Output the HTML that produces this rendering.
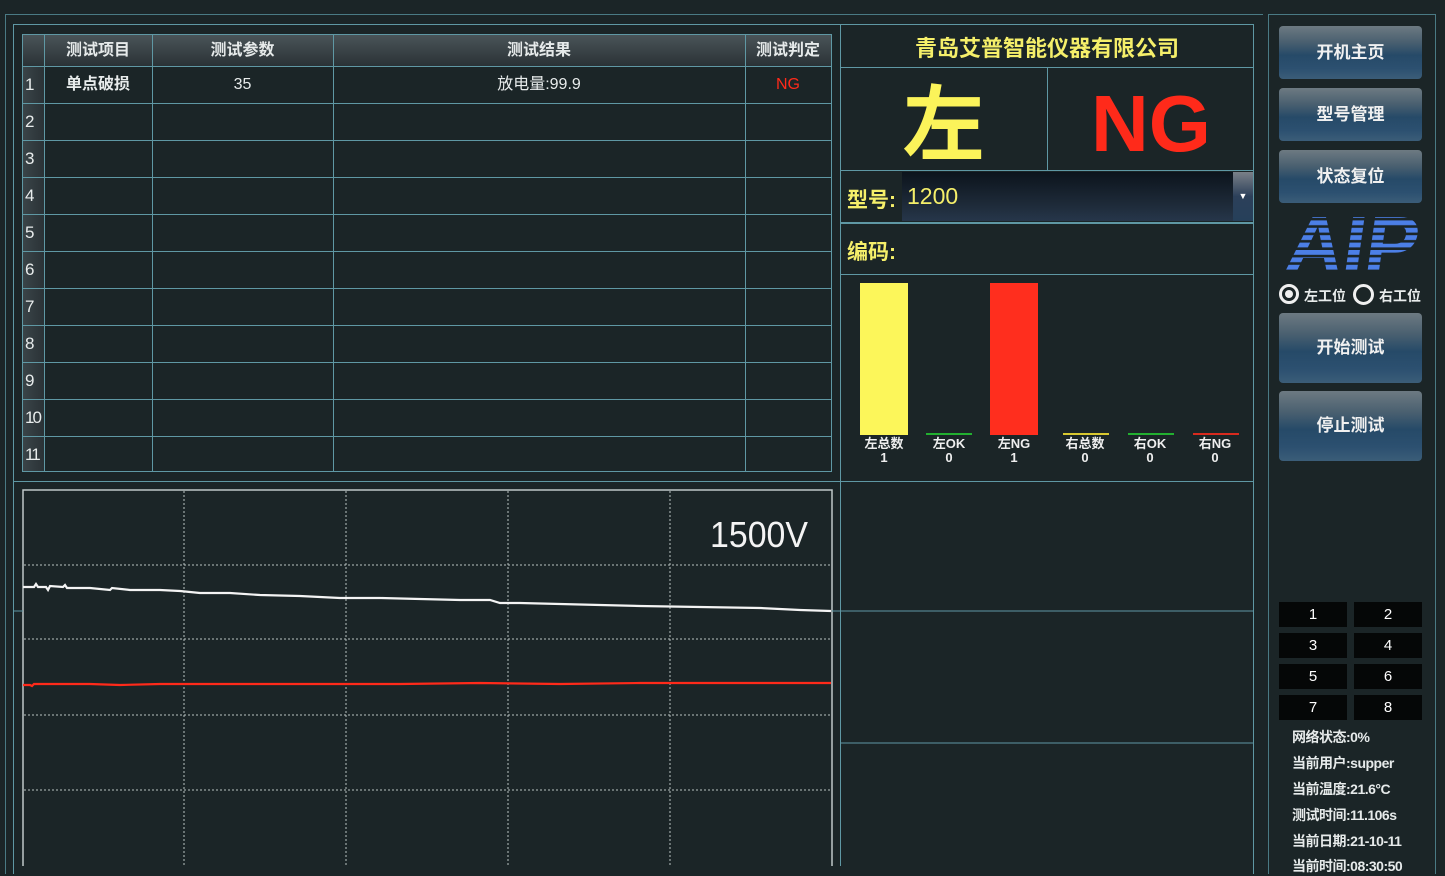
<!DOCTYPE html>
<html><head><meta charset="utf-8"><style>
*{margin:0;padding:0;box-sizing:border-box}
body{width:1445px;height:866px;background:#1b2527;position:relative;overflow:hidden;font-family:"Liberation Sans","Noto Sans CJK SC",sans-serif;color:#e8ecec}
.a{position:absolute}
.l{position:absolute;background:#5f98a4}
.hd{position:absolute;top:35px;height:31px;background:linear-gradient(#4a5458,#2a3236);color:#e6eaea;font-size:16px;font-weight:bold;text-align:center;line-height:31px}
.rn{position:absolute;left:23px;width:21px;background:linear-gradient(90deg,#3a4448,#2a3236);font-size:17px;line-height:38px;padding-left:2px;color:#e8ecec}
.c1{position:absolute;top:66px;height:37px;line-height:38px;text-align:center;font-size:16px}
.btn{position:absolute;left:1279px;width:143px;border-radius:4px;background:linear-gradient(#6d7a82 0%,#4a6070 30%,#264a68 55%,#2c5070 80%,#3b5d78 100%);color:#f0f0f0;font-size:17px;font-weight:bold;text-align:center}
.nb{position:absolute;width:68px;height:25px;background:#050707;color:#fff;font-size:15px;text-align:center;line-height:25px}
.st{position:absolute;left:1292px;font-size:14px;font-weight:bold;color:#e6eaea;letter-spacing:-0.5px}
.bl{position:absolute;font-size:13px;font-weight:bold;text-align:center;width:60px;line-height:14px;color:#eee}
</style></head><body>
<div class="a" style="left:5px;top:14px;width:1258px;height:860px;border:1px solid #4a7a84;border-right:none;border-bottom:none"></div>
<div class="a" style="left:13px;top:24px;width:1241px;height:850px;border:1px solid #5f98a4;border-bottom:none"></div>
<div class="a" style="left:1268px;top:14px;width:168px;height:860px;border:1px solid #4a7a84;border-bottom:none"></div>

<div class="a" style="left:22px;top:34px;width:810px;height:438px;border:1px solid #5f98a4"></div>
<div class="hd" style="left:23px;width:21px"></div>
<div class="hd" style="left:44px;width:108px">测试项目</div>
<div class="hd" style="left:152px;width:181px">测试参数</div>
<div class="hd" style="left:333px;width:412px">测试结果</div>
<div class="hd" style="left:745px;width:86px">测试判定</div>
<div class="rn" style="top:66px;height:37px">1</div>
<div class="rn" style="top:103px;height:37px">2</div>
<div class="rn" style="top:140px;height:37px">3</div>
<div class="rn" style="top:177px;height:37px">4</div>
<div class="rn" style="top:214px;height:37px">5</div>
<div class="rn" style="top:251px;height:37px">6</div>
<div class="rn" style="top:288px;height:37px">7</div>
<div class="rn" style="top:325px;height:37px">8</div>
<div class="rn" style="top:362px;height:37px">9</div>
<div class="rn" style="top:399px;height:37px;letter-spacing:-2px">10</div>
<div class="rn" style="top:436px;height:35px;letter-spacing:-2px">11</div>
<div class="l" style="left:23px;top:66px;width:808px;height:1px"></div>
<div class="l" style="left:23px;top:103px;width:808px;height:1px"></div>
<div class="l" style="left:23px;top:140px;width:808px;height:1px"></div>
<div class="l" style="left:23px;top:177px;width:808px;height:1px"></div>
<div class="l" style="left:23px;top:214px;width:808px;height:1px"></div>
<div class="l" style="left:23px;top:251px;width:808px;height:1px"></div>
<div class="l" style="left:23px;top:288px;width:808px;height:1px"></div>
<div class="l" style="left:23px;top:325px;width:808px;height:1px"></div>
<div class="l" style="left:23px;top:362px;width:808px;height:1px"></div>
<div class="l" style="left:23px;top:399px;width:808px;height:1px"></div>
<div class="l" style="left:23px;top:436px;width:808px;height:1px"></div>
<div class="l" style="left:44px;top:35px;width:1px;height:436px"></div>
<div class="l" style="left:152px;top:35px;width:1px;height:436px"></div>
<div class="l" style="left:333px;top:35px;width:1px;height:436px"></div>
<div class="l" style="left:745px;top:35px;width:1px;height:436px"></div>
<div class="c1" style="left:44px;width:108px;font-weight:bold">单点破损</div>
<div class="c1" style="left:152px;width:181px">35</div>
<div class="c1" style="left:333px;width:412px">放电量:99.9</div>
<div class="c1" style="left:745px;width:86px;color:#ff2a1a">NG</div>

<div class="l" style="left:13px;top:481px;width:1241px;height:1px"></div>
<div class="l" style="left:840px;top:25px;width:1px;height:841px"></div>

<svg class="a" style="left:0;top:0" width="1445" height="866">
<rect x="23" y="490" width="809" height="380" fill="none" stroke="#bfc8c8" stroke-width="1.5"/>
<g stroke="#b8c2c2" stroke-width="1" stroke-dasharray="2,2">
<line x1="184" y1="491" x2="184" y2="866"/><line x1="346" y1="491" x2="346" y2="866"/><line x1="508" y1="491" x2="508" y2="866"/><line x1="670" y1="491" x2="670" y2="866"/>
<line x1="24" y1="565" x2="831" y2="565"/><line x1="24" y1="639" x2="831" y2="639"/><line x1="24" y1="715" x2="831" y2="715"/><line x1="24" y1="790" x2="831" y2="790"/>
</g>
<line x1="13" y1="611" x2="23" y2="611" stroke="#5f98a4"/>
<line x1="832" y1="611" x2="1254" y2="611" stroke="#5f98a4"/>
<line x1="840" y1="743" x2="1254" y2="743" stroke="#5f98a4"/>
<polyline fill="none" stroke="#f4f4f4" stroke-width="2.2" points="23,587 34,587 36,584 38,587 46,587 48,590 50,586 63,587 65,585 67,588 90,588 110,590 112,588 130,590 160,590 180,591 200,593 230,593 260,595 300,596 340,598 380,598 420,599 460,600 490,600 500,603 520,603 560,604 600,605 640,606 700,607 760,608 800,610 831,611"/>
<polyline fill="none" stroke="#ff2a1a" stroke-width="2.2" points="23,685 30,685 32,686 34,684 60,684 90,684 120,685 160,684 200,684 260,684 320,684 400,684 480,683 560,684 640,683 720,683 780,683 831,683"/>
<text x="808" y="547" text-anchor="end" font-family="Liberation Sans" font-size="36" fill="#f4f4f4" textLength="98" lengthAdjust="spacingAndGlyphs">1500V</text>
</svg>

<div class="l" style="left:840px;top:67px;width:414px;height:1px"></div>
<div class="l" style="left:1047px;top:67px;width:1px;height:103px"></div>
<div class="l" style="left:840px;top:170px;width:414px;height:1px"></div>
<div class="l" style="left:840px;top:222px;width:414px;height:2px"></div>
<div class="l" style="left:840px;top:274px;width:414px;height:1px"></div>
<div class="a" style="left:840px;top:31px;width:414px;text-align:center;font-size:22px;font-weight:bold;color:#f5ef6a">青岛艾普智能仪器有限公司</div>
<div class="a" style="left:840px;top:78px;width:207px;text-align:center;font-size:82px;font-weight:bold;color:#fbf35a;line-height:96px">左</div>
<div class="a" style="left:1048px;top:76px;width:206px;text-align:center;font-size:80px;font-weight:bold;color:#ff2a1a;line-height:96px">NG</div>
<div class="a" style="left:847px;top:184px;font-size:21px;font-weight:bold;color:#f5ef6a">型号:</div>
<div class="a" style="left:902px;top:172px;width:331px;height:49px;background:linear-gradient(#0c141c,#1c2836 60%,#26364a);"></div>
<div class="a" style="left:1233px;top:172px;width:20px;height:49px;background:linear-gradient(#7a8088,#2c405a 50%,#26405a);color:#fff;font-size:9px;text-align:center;line-height:49px">▼</div>
<div class="a" style="left:907px;top:183px;font-size:23px;color:#f5ef6a">1200</div>
<div class="a" style="left:847px;top:236px;font-size:21px;font-weight:bold;color:#f5ef6a">编码:</div>
<div class="a" style="left:860px;top:283px;width:48px;height:152px;background:#fcf65a"></div>
<div class="a" style="left:990px;top:283px;width:48px;height:152px;background:#ff2e1e"></div>
<div class="a" style="left:926px;top:433px;width:46px;height:2px;background:#22b030"></div>
<div class="a" style="left:1063px;top:433px;width:46px;height:2px;background:#d8c830"></div>
<div class="a" style="left:1128px;top:433px;width:46px;height:2px;background:#22b030"></div>
<div class="a" style="left:1193px;top:433px;width:46px;height:2px;background:#d82a1e"></div>
<div class="bl" style="left:854px;top:437px">左总数<br>1</div>
<div class="bl" style="left:919px;top:437px">左OK<br>0</div>
<div class="bl" style="left:984px;top:437px">左NG<br>1</div>
<div class="bl" style="left:1055px;top:437px">右总数<br>0</div>
<div class="bl" style="left:1120px;top:437px">右OK<br>0</div>
<div class="bl" style="left:1185px;top:437px">右NG<br>0</div>

<div class="btn" style="top:26px;height:53px;line-height:53px">开机主页</div>
<div class="btn" style="top:88px;height:53px;line-height:53px">型号管理</div>
<div class="btn" style="top:150px;height:53px;line-height:53px">状态复位</div>
<svg class="a" style="left:1280px;top:208px" width="140" height="70">
<defs><pattern id="p" x="0" y="5" width="10" height="7.4" patternUnits="userSpaceOnUse"><rect width="10" height="4.8" fill="#fff"/></pattern>
<mask id="m"><rect x="0" y="5" width="140" height="62" fill="url(#p)"/></mask></defs>
<text x="4" y="64" font-family="Liberation Sans" font-weight="bold" font-size="80" fill="#4c7fe6" textLength="132" lengthAdjust="spacingAndGlyphs" mask="url(#m)" transform="skewX(-8) translate(8,0)">AIP</text>
</svg>
<div class="a" style="left:1279px;top:284px;width:20px;height:20px;border:3px solid #f0f0f0;border-radius:50%;background:#1b2527"><div style="margin:3px;width:8px;height:8px;border-radius:50%;background:#f0f0f0"></div></div>
<div class="a" style="left:1304px;top:286px;font-size:14px;font-weight:bold">左工位</div>
<div class="a" style="left:1353px;top:284px;width:21px;height:21px;border:3px solid #f0f0f0;border-radius:50%"></div>
<div class="a" style="left:1379px;top:286px;font-size:14px;font-weight:bold">右工位</div>
<div class="btn" style="top:313px;height:70px;line-height:70px">开始测试</div>
<div class="btn" style="top:391px;height:70px;line-height:70px">停止测试</div>
<div class="nb" style="left:1279px;top:602px">1</div><div class="nb" style="left:1354px;top:602px">2</div>
<div class="nb" style="left:1279px;top:633px">3</div><div class="nb" style="left:1354px;top:633px">4</div>
<div class="nb" style="left:1279px;top:664px">5</div><div class="nb" style="left:1354px;top:664px">6</div>
<div class="nb" style="left:1279px;top:695px">7</div><div class="nb" style="left:1354px;top:695px">8</div>
<div class="st" style="top:727px">网络状态:0%</div>
<div class="st" style="top:753px">当前用户:supper</div>
<div class="st" style="top:779px">当前温度:21.6°C</div>
<div class="st" style="top:805px">测试时间:11.106s</div>
<div class="st" style="top:831px">当前日期:21-10-11</div>
<div class="st" style="top:856px">当前时间:08:30:50</div>
</body></html>
